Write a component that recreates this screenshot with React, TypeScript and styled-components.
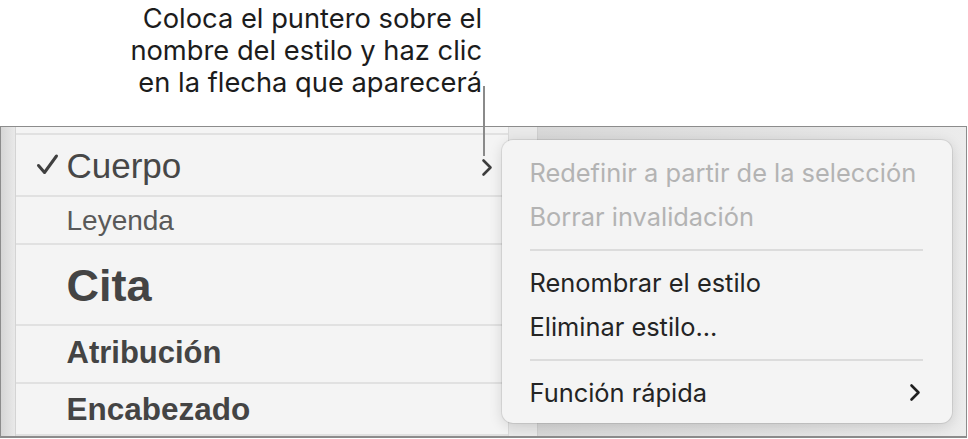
import styled, { createGlobalStyle } from "styled-components";

const GlobalStyle = createGlobalStyle`
  html, body {
    margin: 0;
    padding: 0;
    background: #ffffff;
  }
  * {
    box-sizing: border-box;
  }
`;

const styleRows = [
  { name: "Cuerpo", size: 35, weight: 400, color: "#474747", height: 62, top: 13, checked: true },
  { name: "Leyenda", size: 28, weight: 400, color: "#595959", height: 48, top: 10 },
  { name: "Cita", size: 45, weight: 700, color: "#444444", height: 81, top: 18 },
  { name: "Atribución", size: 31, weight: 700, color: "#444444", height: 58, top: 11 },
  { name: "Encabezado", size: 31.5, weight: 700, color: "#444444", height: 52, top: 10 },
];

function CheckIcon() {
  return (
    <svg width="23" height="23" viewBox="0 0 23 23">
      <path
        d="M2.5 12.5 L8.5 19.5 L20.5 3"
        fill="none"
        stroke="#404040"
        strokeWidth="3"
        strokeLinecap="round"
        strokeLinejoin="round"
      />
    </svg>
  );
}

function Chevron({ color }: { color: string }) {
  return (
    <svg width="12" height="19" viewBox="0 0 12 19">
      <path
        d="M2.5 2.5 L9.5 9.5 L2.5 16.5"
        fill="none"
        stroke={color}
        strokeWidth="2.6"
        strokeLinecap="round"
        strokeLinejoin="round"
      />
    </svg>
  );
}

export default function App() {
  return (
    <>
      <GlobalStyle />
      <Page>
        <Callout>
          <CalloutText>
            Coloca el puntero sobre el
            <br />
            nombre del estilo y haz clic
            <br />
            en la flecha que aparecerá
          </CalloutText>
          <Leader />
        </Callout>
        <Frame>
          <Sidebar />
          <StyleList>
            <TopRow />
            {styleRows.map((row) => (
              <StyleRow key={row.name} $height={row.height} $top={row.top}>
                <CheckSlot>{row.checked && <CheckIcon />}</CheckSlot>
                <StyleName $size={row.size} $weight={row.weight} $color={row.color}>
                  {row.name}
                </StyleName>
                {row.checked && (
                  <RowArrow>
                    <Chevron color="#3d3d3d" />
                  </RowArrow>
                )}
              </StyleRow>
            ))}
          </StyleList>
          <Gutter />
          <Canvas />
          <ContextMenu>
            <MenuItem $disabled>Redefinir a partir de la selección</MenuItem>
            <MenuItem $disabled>Borrar invalidación</MenuItem>
            <Separator />
            <MenuItem>Renombrar el estilo</MenuItem>
            <MenuItem>Eliminar estilo...</MenuItem>
            <Separator />
            <MenuItem>
              Función rápida
              <Chevron color="#1f1f1f" />
            </MenuItem>
          </ContextMenu>
        </Frame>
      </Page>
    </>
  );
}

const Page = styled.div`
  width: 968px;
  height: 439px;
  display: flex;
  flex-direction: column;
  overflow: hidden;
  background: #ffffff;
`;

const Callout = styled.div`
  position: relative;
  height: 126px;
  flex-shrink: 0;
  display: flex;
  justify-content: flex-end;
  padding: 3px 486px 0 0;
`;

const CalloutText = styled.div`
  font-family: "Inter", "Roboto", sans-serif;
  font-size: 27.3px;
  line-height: 32px;
  color: #1c1c1c;
  text-align: right;
`;

const Leader = styled.div`
  position: absolute;
  left: 483px;
  top: 86px;
  width: 2px;
  height: 70px;
  background: #8a8a8a;
  z-index: 2;
`;

const Frame = styled.div`
  position: relative;
  width: 967px;
  height: 312px;
  flex-shrink: 0;
  display: flex;
  border: 1.5px solid #8c8c8c;
  border-bottom-width: 2px;
  background: #dcdcdc;
`;

const Sidebar = styled.div`
  width: 14.5px;
  flex-shrink: 0;
  background: linear-gradient(to right, #d6d6d6, #e9e9e9);
  border-right: 1px solid #d4d4d4;
`;

const StyleList = styled.div`
  width: 492px;
  flex-shrink: 0;
  display: flex;
  flex-direction: column;
  background: #f4f4f4;
`;

const TopRow = styled.div`
  height: 8px;
  flex-shrink: 0;
  border-bottom: 2px solid #e1e1e1;
`;

const StyleRow = styled.div<{ $height: number; $top: number }>`
  height: ${({ $height }) => $height}px;
  flex-shrink: 0;
  display: flex;
  align-items: flex-start;
  padding: ${({ $top }) => $top}px 15px 0 20px;
  border-bottom: 2px solid #e1e1e1;
`;

const CheckSlot = styled.div`
  width: 31px;
  flex-shrink: 0;
  display: flex;
  padding-top: 5px;
`;

const StyleName = styled.div<{ $size: number; $weight: number; $color: string }>`
  flex: 1;
  font-family: "Liberation Sans", Arial, sans-serif;
  font-size: ${({ $size }) => $size}px;
  font-weight: ${({ $weight }) => $weight};
  color: ${({ $color }) => $color};
  line-height: 1;
  white-space: nowrap;
`;

const RowArrow = styled.div`
  display: flex;
  padding-top: 10px;
`;

const Gutter = styled.div`
  width: 30px;
  flex-shrink: 0;
  background: #e9e9e9;
  border-left: 1px solid #dadada;
  border-right: 1px solid #cfcfcf;
`;

const Canvas = styled.div`
  flex: 1;
  background: linear-gradient(to right, #d8d8d8, #e3e3e3 60%, #ececec);
`;

const ContextMenu = styled.div`
  position: absolute;
  left: 500.5px;
  top: 12.5px;
  width: 450px;
  height: 283px;
  padding: 11px 0 10px;
  display: flex;
  flex-direction: column;
  background: #f4f4f4;
  border-radius: 11px;
  box-shadow: 0 0 0 1px rgba(0, 0, 0, 0.08), 0 3px 14px rgba(0, 0, 0, 0.14);
  z-index: 1;
`;

const MenuItem = styled.div<{ $disabled?: boolean }>`
  height: 44px;
  flex-shrink: 0;
  display: flex;
  align-items: center;
  justify-content: space-between;
  padding: 0 31px 0 28px;
  font-family: "Inter", "Roboto", sans-serif;
  font-size: 25.4px;
  line-height: 44px;
  color: ${({ $disabled }) => ($disabled ? "#b3b3b3" : "#242424")};
  white-space: nowrap;
`;

const Separator = styled.div`
  height: 2px;
  margin: 10px 29px 10px 28px;
  flex-shrink: 0;
  background: #dcdcdc;
`;
